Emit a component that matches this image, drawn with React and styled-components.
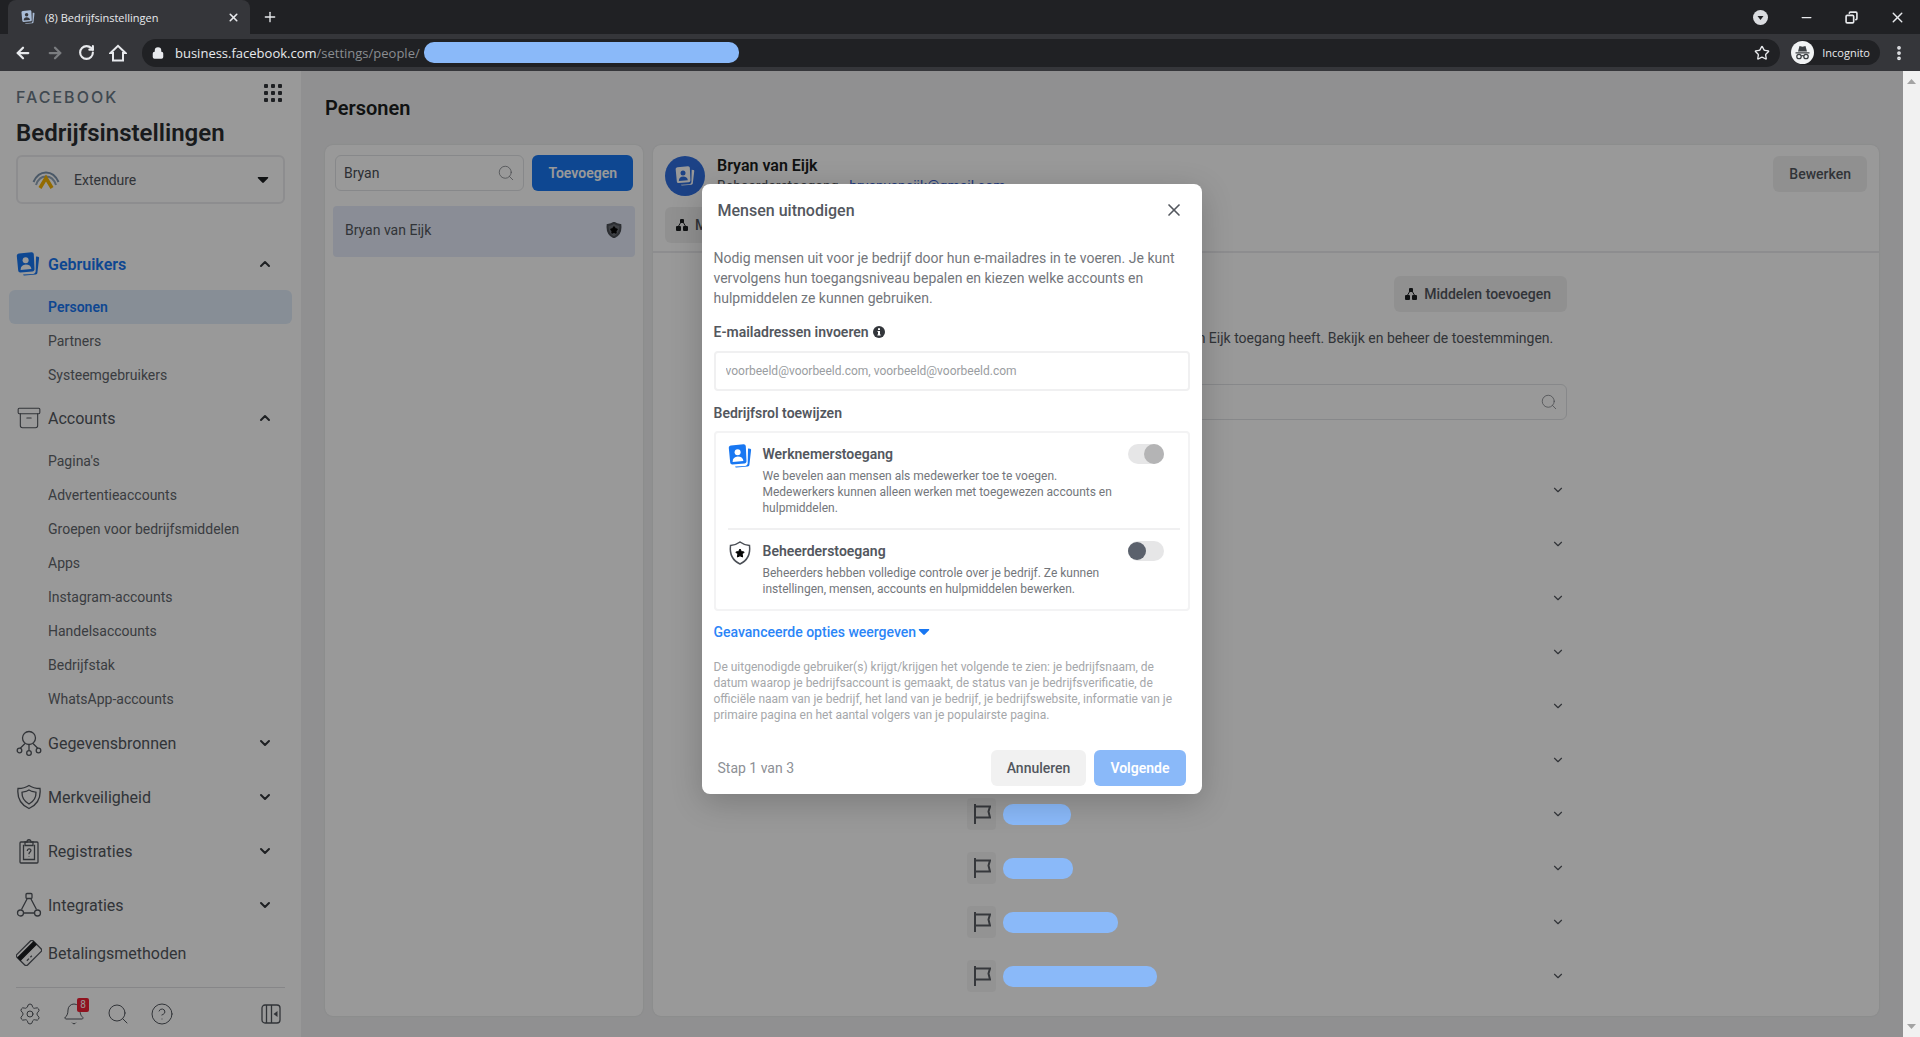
import React from 'react';
import styled, { createGlobalStyle } from 'styled-components';
import { ArrowLeft, ArrowRight, RotateCw, Lock, Star, EllipsisVertical, X, Plus, Minus, Copy, Search, Archive, CircleQuestionMark, Bell, Settings, ChevronDown, ChevronUp } from 'lucide-react';

const accountItems = [
    "Pagina's",
    'Advertentieaccounts',
    'Groepen voor bedrijfsmiddelen',
    'Apps',
    'Instagram-accounts',
    'Handelsaccounts',
    'Bedrijfstak',
    'WhatsApp-accounts',
];

const assets = [70, 96, 84, 110, 76, 90, 68, 70, 115, 154];

const PeopleIcon = ({ size = 24, color = '#1877f2', hole = '#fff' }) => (
    <svg width={size} height={size} viewBox="0 0 24 24" aria-hidden="true">
        <path d="M20 4.5l2.2.3c.6.1 1 .6.9 1.200l-1.700 14.800c-.1.900-.8 1.600-1.700 1.700l-11.200 1c-.7.1-1.300-.4-1.400-1l9.900-.6c1.500-.1 2.600-1.200 2.700-2.700z" fill={color} />
        <path d="M3 1.500L15.500.3c1.200-.1 2.200.8 2.300 2l.7 14.700c.1 1.300-.8 2.300-2.100 2.400L4.500 20.500c-1.200.1-2.200-.7-2.300-1.900L.8 4C.7 2.700 1.700 1.600 3 1.500z" fill={color} />
        <circle cx="9.600" cy="8.300" r="3" fill={hole} />
        <path d="M4.600 18c0-3.500 2-5.300 5.200-5.400 3.200 0 5.200 1.400 5.600 4.500z" fill={hole} />
    </svg>
);

const HomeIcon = () => (
    <svg width="18" height="18" viewBox="0 0 18 18" fill="none" stroke="currentColor" strokeWidth="2" aria-hidden="true">
        <path d="M1.500 9L9 1.800 16.500 9H14v7.500H4V9z" />
    </svg>
);

const SourcesIcon = () => (
    <LineSvg viewBox="0 0 26 26">
        <circle cx="13" cy="8" r="6.500" />
        <path d="M9 13.500l-5 5M17 13.500l5 5M13 14.500v6" />
        <circle cx="3.500" cy="20.500" r="2.300" />
        <circle cx="22.500" cy="20.500" r="2.300" />
        <circle cx="13" cy="23" r="2.300" />
    </LineSvg>
);

const SafetyIcon = () => (
    <LineSvg viewBox="0 0 26 26">
        <path d="M13 1.500c3 2 7 3 11 3 1 9-2 16-11 20C4 20.500 1 13.500 2 4.500c4 0 8-1 11-3z" />
        <path d="M13 6l3 1.500 4 .7c.2 5-2 9-7 11.800-5-2.800-7.200-6.800-7-11.800l4-.7z" />
    </LineSvg>
);

const RegistrationIcon = () => (
    <LineSvg viewBox="0 0 26 26">
        <rect x="4" y="4" width="18" height="21" rx="1" />
        <path d="M8 7.500H7.500v14h11v-14H18M9 7.500h8V4h-2c0-3-4-3-4 0H9z" />
        <path d="M11.300 13c0-3 4-2.500 3.600-.3-.2 1.200-1.800 1.400-1.900 3v.6M13 18.500v.5" />
    </LineSvg>
);

const IntegrationIcon = () => (
    <LineSvg viewBox="0 0 26 26">
        <rect x="10" y="1.500" width="6" height="5" rx="1" />
        <path d="M11 7L5.500 17.500M15 7l5.500 10.500M7.500 21h11" />
        <circle cx="4.500" cy="21" r="3" />
        <circle cx="21.500" cy="21" r="3" />
    </LineSvg>
);

const PaymentIcon = () => (
    <LineSvg viewBox="0 0 26 26">
        <g transform="rotate(-45 13 13)">
            <rect x="1.500" y="5.500" width="23" height="15" rx="2" />
            <rect x="2" y="8.500" width="22" height="3.500" fill="#1c1e21" stroke="#1c1e21" />
            <path d="M6 17h3M11 17h2" />
        </g>
    </LineSvg>
);

const PanelIcon = () => (
    <LineSvg $size={20} viewBox="0 0 20 20">
        <rect x="1" y="1" width="18" height="18" rx="3" />
        <path d="M10.500 1v18M5.500 1v18" />
        <path d="M16.500 7v6l-4-3z" fill="currentColor" stroke="none" />
    </LineSvg>
);

const AdminShield = ({ size = 24, filled }) => (
    <svg width={size} height={size} viewBox="0 0 24 24" aria-hidden="true">
        <path d="M12 1c2.500 2 5.500 3 9.500 3.500C22.500 13 20.500 19 12 23 3.500 19 1.500 13 2.500 4.500 6.500 4 9.500 3 12 1z" fill={filled ? '#6b6f76' : 'none'} stroke="#4b4f56" strokeWidth={filled ? 3 : 1.5} />
        <path d="M12 8l1.400 2.500 2.800.6-2 2 .4 2.900-2.600-1.200L9.400 16l.4-2.900-2-2 2.800-.6z" fill="#050505" stroke="#050505" strokeWidth={filled ? 3 : 1} strokeLinejoin="round" />
    </svg>
);

const AssetIcon = () => (
    <svg width="14" height="14" viewBox="0 0 14 14" fill="#1c1e21" aria-hidden="true">
        <path d="M6 4L3 9M8 4l3 5" stroke="#1c1e21" strokeWidth="1" />
        <rect x="5" y="1" width="4" height="4" rx="1" />
        <rect x="1" y="8" width="5" height="5" rx="1" />
        <rect x="8" y="8" width="5" height="5" rx="1" />
    </svg>
);

const FlagIcon = () => (
    <svg width="18" height="20" viewBox="0 0 18 20" fill="none" stroke="#5a5e64" strokeWidth="2" aria-hidden="true">
        <path d="M2 0v20M2 2.500h15l-1.500 5 1.500 6H2" />
    </svg>
);

const Caret = ({ color = '#1c1e21' }) => (
    <svg width="12" height="8" viewBox="0 0 12 8" aria-hidden="true">
        <path d="M1.500 1h9c.8 0 1 .7.500 1.200L6.800 6.600c-.5.500-1.100.5-1.600 0L1 2.200C.5 1.700.7 1 1.500 1z" fill={color} />
    </svg>
);

const CompanyLogo = () => (
    <svg width="28" height="18" viewBox="0 0 28 18" fill="none" aria-hidden="true">
        <path d="M1.500 11C5 3 10 1.500 14 1.500S23 3 26.500 11" stroke="#7d95ad" strokeWidth="2" />
        <path d="M4 14c2-6 6-8.500 10-8.500s8 2.500 10 8.500" stroke="#93a7ba" strokeWidth="2" />
        <path d="M8 17l6-10 6 10" stroke="#f5b301" strokeWidth="3.500" />
    </svg>
);

const IncognitoIcon = () => (
    <svg width="23" height="23" viewBox="0 0 23 23" aria-hidden="true">
        <circle cx="11.500" cy="11.500" r="11.500" fill="#f1f3f4" />
        <path d="M8.500 5l3 .8 3-.8 1.500 5.500H7zM4.500 11.200h14v1.200h-14z" fill="#3c4043" />
        <g fill="none" stroke="#3c4043" strokeWidth="1.300">
            <circle cx="8" cy="15.500" r="2.200" />
            <circle cx="15" cy="15.500" r="2.200" />
            <path d="M10.200 15c.8-.5 1.800-.5 2.600 0" />
        </g>
    </svg>
);

const NavGroup = ({ icon, label, open, active, items }) => (
    <li>
        <GroupButton $open={open} $active={active}>
            <IconSlot>{icon}</IconSlot>
            <GroupLabel>{label}</GroupLabel>
            {open ? <ChevronUp size={16} strokeWidth={3} color="#33363b" /> : <ChevronDown size={16} strokeWidth={3} color="#33363b" />}
        </GroupButton>
        {items && (
            <NavList>
                {items.map((item) => (
                    <li key={item}>
                        <NavLink href="#" $active={item === 'Personen'}>{item}</NavLink>
                    </li>
                ))}
            </NavList>
        )}
    </li>
);

const Browser = () => (
    <header>
        <TabStrip>
            <Tab>
                <PeopleIcon size={14} color="#a9bcd6" hole="#35363a" />
                <TabTitle>(8) Bedrijfsinstellingen</TabTitle>
                <ChromeButton aria-label="Tabblad sluiten"><X size={13} strokeWidth={3} /></ChromeButton>
            </Tab>
            <NewTab aria-label="Nieuw tabblad"><Plus size={16} strokeWidth={2} /></NewTab>
            <WindowButtons>
                <ChromeButton aria-label="Account">
                    <svg width="15" height="15" viewBox="0 0 15 15" aria-hidden="true">
                        <circle cx="7.500" cy="7.500" r="7.500" fill="#dadce0" />
                        <path d="M4.500 6h6l-3 4z" fill="#202124" />
                    </svg>
                </ChromeButton>
                <ChromeButton aria-label="Minimaliseren"><Minus size={15} /></ChromeButton>
                <ChromeButton aria-label="Vorig formaat"><Restore size={13} strokeWidth={3} /></ChromeButton>
                <ChromeButton aria-label="Sluiten"><X size={17} /></ChromeButton>
            </WindowButtons>
        </TabStrip>
        <Toolbar>
            <NavButtons>
                <ChromeButton aria-label="Vorige"><ArrowLeft size={18} strokeWidth={3} /></ChromeButton>
                <ChromeButton aria-label="Volgende pagina" $dim><ArrowRight size={18} strokeWidth={3} /></ChromeButton>
                <ChromeButton aria-label="Vernieuwen"><RotateCw size={17} strokeWidth={3} /></ChromeButton>
                <ChromeButton aria-label="Startpagina"><HomeIcon /></ChromeButton>
            </NavButtons>
            <AddressBar>
                <Lock size={12} strokeWidth={3} fill="#e8eaed" />
                <Url>business.facebook.com<span>/settings/people/</span></Url>
                <Redacted $width={315} />
                <Spacer />
                <ChromeButton aria-label="Bladwijzer"><Star size={16} strokeWidth={2} /></ChromeButton>
            </AddressBar>
            <Incognito>
                <IncognitoIcon />
                Incognito
            </Incognito>
            <ChromeButton aria-label="Menu"><EllipsisVertical size={18} strokeWidth={3} /></ChromeButton>
        </Toolbar>
    </header>
);

const Sidebar = () => (
    <SidebarBox>
        <BrandRow>
            <Brand>FACEBOOK</Brand>
            <PlainButton aria-label="Alle hulpmiddelen">
                <svg width="20" height="20" viewBox="0 0 20 20" fill="#33363b" aria-hidden="true">
                    {[0, 7, 14].map((y) => [0, 7, 14].map((x) => <rect key={x + '-' + y} x={x + 1} y={y + 1} width="4" height="4" rx="1" />))}
                </svg>
            </PlainButton>
        </BrandRow>
        <SidebarTitle>Bedrijfsinstellingen</SidebarTitle>
        <CompanyPicker>
            <CompanyLogo />
            <CompanySelect aria-label="Bedrijf">
                <option>Extendure</option>
            </CompanySelect>
            <Caret />
        </CompanyPicker>
        <nav>
            <NavList>
                <NavGroup icon={<PeopleIcon />} label="Gebruikers" open active items={['Personen', 'Partners', 'Systeemgebruikers']} />
                <NavGroup icon={<Archive size={26} strokeWidth={1} />} label="Accounts" open items={accountItems} />
                <NavGroup icon={<SourcesIcon />} label="Gegevensbronnen" />
                <NavGroup icon={<SafetyIcon />} label="Merkveiligheid" />
                <NavGroup icon={<RegistrationIcon />} label="Registraties" />
                <NavGroup icon={<IntegrationIcon />} label="Integraties" />
                <li>
                    <GroupLink href="#">
                        <IconSlot><PaymentIcon /></IconSlot>
                        <GroupLabel>Betalingsmethoden</GroupLabel>
                    </GroupLink>
                </li>
            </NavList>
        </nav>
        <SidebarFooter>
            <PlainButton aria-label="Instellingen"><Settings size={24} strokeWidth={1} /></PlainButton>
            <PlainButton aria-label="Meldingen">
                <Bell size={24} strokeWidth={1} />
                <Badge>8</Badge>
            </PlainButton>
            <PlainButton aria-label="Zoeken"><Search size={24} strokeWidth={1} /></PlainButton>
            <PlainButton aria-label="Help"><CircleQuestionMark size={24} strokeWidth={1} /></PlainButton>
            <Spacer />
            <PlainButton aria-label="Menu inklappen"><PanelIcon /></PlainButton>
        </SidebarFooter>
    </SidebarBox>
);

const InviteDialog = () => (
    <Dialog role="dialog" aria-labelledby="invite-title">
        <DialogHeader>
            <DialogTitle id="invite-title">Mensen uitnodigen</DialogTitle>
            <PlainButton aria-label="Sluiten"><X size={20} strokeWidth={2} /></PlainButton>
        </DialogHeader>
        <DialogBody>
            <Intro>
                Nodig mensen uit voor je bedrijf door hun e-mailadres in te voeren. Je kunt vervolgens hun toegangsniveau bepalen en kiezen welke accounts en hulpmiddelen ze kunnen gebruiken.
            </Intro>
            <FieldLabel htmlFor="emails">
                E-mailadressen invoeren
                <svg width="12" height="12" viewBox="0 0 12 12" aria-hidden="true">
                    <circle cx="6" cy="6" r="6" fill="#33363b" />
                    <path d="M5 2.300h2v1.600H5zM4.500 5H7v3.500h.7v1H4.400v-1H5V6h-.5z" fill="#fff" />
                </svg>
            </FieldLabel>
            <EmailInput id="emails" placeholder="voorbeeld@voorbeeld.com, voorbeeld@voorbeeld.com" />
            <SectionLabel>Bedrijfsrol toewijzen</SectionLabel>
            <RoleBox>
                <Role>
                    <PeopleIcon />
                    <div>
                        <RoleTitle htmlFor="employee">Werknemerstoegang</RoleTitle>
                        <RoleText>We bevelen aan mensen als medewerker toe te voegen. Medewerkers kunnen alleen werken met toegewezen accounts en hulpmiddelen.</RoleText>
                    </div>
                    <Switch id="employee" type="checkbox" defaultChecked disabled />
                </Role>
                <Role>
                    <AdminShield />
                    <div>
                        <RoleTitle htmlFor="admin">Beheerderstoegang</RoleTitle>
                        <RoleText>Beheerders hebben volledige controle over je bedrijf. Ze kunnen instellingen, mensen, accounts en hulpmiddelen bewerken.</RoleText>
                    </div>
                    <Switch id="admin" type="checkbox" />
                </Role>
            </RoleBox>
            <AdvancedLink href="#">
                Geavanceerde opties weergeven
                <Caret color="#1877f2" />
            </AdvancedLink>
            <FinePrint>
                De uitgenodigde gebruiker(s) krijgt/krijgen het volgende te zien: je bedrijfsnaam, de datum waarop je bedrijfsaccount is gemaakt, de status van je bedrijfsverificatie, de officiële naam van je bedrijf, het land van je bedrijf, je bedrijfswebsite, informatie van je primaire pagina en het aantal volgers van je populairste pagina.
            </FinePrint>
        </DialogBody>
        <DialogFooter>
            <Step>Stap 1 van 3</Step>
            <Button>Annuleren</Button>
            <Button $primary disabled>Volgende</Button>
        </DialogFooter>
    </Dialog>
);

const App = () => {
    return (
        <Window>
            <GlobalStyle />
            <Browser />
            <Viewport>
                <Page>
                    <Sidebar />
                    <Main>
                        <PageTitle>Personen</PageTitle>
                        <Panels>
                            <PeoplePanel>
                                <SearchRow>
                                    <SearchBox>
                                        <input aria-label="Personen zoeken" defaultValue="Bryan" />
                                        <Search size={18} strokeWidth={1} />
                                    </SearchBox>
                                    <Button $strong>Toevoegen</Button>
                                </SearchRow>
                                <PersonRow>
                                    Bryan van Eijk
                                    <AdminShield size={16} filled />
                                </PersonRow>
                            </PeoplePanel>
                            <DetailPanel>
                                <DetailHeader>
                                    <Person>
                                        <Avatar><PeopleIcon size={20} color="#fff" hole="#2f6fe0" /></Avatar>
                                        <div>
                                            <PersonName>Bryan van Eijk</PersonName>
                                            <PersonMeta>Beheerderstoegang · <a href="#">bryanvaneijk@gmail.com</a></PersonMeta>
                                        </div>
                                        <Spacer />
                                        <Button>Bewerken</Button>
                                    </Person>
                                    <Button $icon><AssetIcon />Middelen toewijzen</Button>
                                </DetailHeader>
                                <Assets>
                                    <AssetsTop>
                                        <Button $icon><AssetIcon />Middelen toevoegen</Button>
                                    </AssetsTop>
                                    <AssetsText>Dit zijn de middelen waartoe Bryan van Eijk toegang heeft. Bekijk en beheer de toestemmingen.</AssetsText>
                                    <SearchBox>
                                        <input aria-label="Middelen zoeken" />
                                        <Search size={18} strokeWidth={1} />
                                    </SearchBox>
                                    <AssetList>
                                        {assets.map((width, i) => (
                                            <AssetRow key={i}>
                                                <FlagBox><FlagIcon /></FlagBox>
                                                <Redacted $width={width} />
                                                <Spacer />
                                                <PlainButton aria-label="Uitklappen"><ChevronDown size={14} strokeWidth={2} /></PlainButton>
                                            </AssetRow>
                                        ))}
                                    </AssetList>
                                </Assets>
                            </DetailPanel>
                        </Panels>
                    </Main>
                    <Scrim />
                    <DialogLayer>
                        <InviteDialog />
                    </DialogLayer>
                </Page>
                <Scrollbar>
                    <svg width="9" height="5" viewBox="0 0 9 5" aria-hidden="true"><path d="M0 5l4.500-5L9 5z" fill="#a3a3a3" /></svg>
                    <svg width="9" height="5" viewBox="0 0 9 5" aria-hidden="true"><path d="M0 0l4.500 5L9 0z" fill="#a3a3a3" /></svg>
                </Scrollbar>
            </Viewport>
        </Window>
    )
}

export default App

const GlobalStyle = createGlobalStyle`
    * {
        box-sizing: border-box;
    }
    body {
        margin: 0;
        font-family: Roboto, "Liberation Sans", sans-serif;
        font-size: 14px;
        color: #53575e;
    }
    button, input, select {
        font: inherit;
        color: inherit;
    }
    h1, h2, h3, p, ul {
        margin: 0;
        padding: 0;
    }
    svg {
        flex: none;
    }
`

const Window = styled.div`
    min-height: 100vh;
    display: flex;
    flex-direction: column;
`

const Spacer = styled.div`
    flex: 1;
`

const LineSvg = styled.svg.attrs({ 'aria-hidden': true })`
    width: ${(props) => props.$size || 26}px;
    height: ${(props) => props.$size || 26}px;
    fill: none;
    stroke: currentColor;
    stroke-width: 1.3;
`

const TabStrip = styled.div`
    height: 34px;
    padding-left: 8px;
    background-color: #202124;
    color: #e8eaed;
    display: flex;
    align-items: center;
    font-family: "Open Sans", "Noto Sans", sans-serif;
`

const Tab = styled.div`
    width: 242px;
    height: 34px;
    padding: 0 10px 0 13px;
    border-radius: 8px 8px 0 0;
    background-color: #35363a;
    display: flex;
    align-items: center;
    gap: 10px;
`

const TabTitle = styled.div`
    flex: 1;
    font-size: 11px;
    white-space: nowrap;
`

const ChromeButton = styled.button`
    border: none;
    padding: 0;
    background: none;
    color: ${(props) => (props.$dim ? '#7b7d80' : '#e8eaed')};
    display: flex;
    cursor: pointer;
`

const NewTab = styled(ChromeButton)`
    margin-left: 12px;
`

const WindowButtons = styled.div`
    margin-left: auto;
    padding-right: 14px;
    display: flex;
    align-items: center;
    gap: 31px;
`

const Restore = styled(Copy)`
    transform: scaleX(-1);
`

const Toolbar = styled.div`
    height: 37px;
    padding: 0 12px;
    background-color: #35363a;
    color: #e8eaed;
    display: flex;
    align-items: center;
    font-family: "Open Sans", "Noto Sans", sans-serif;
`

const NavButtons = styled.div`
    width: 130px;
    padding-left: 2px;
    display: flex;
    gap: 14px;
`

const AddressBar = styled.div`
    flex: 1;
    height: 28px;
    padding: 0 10px;
    border-radius: 14px;
    background-color: #202124;
    display: flex;
    align-items: center;
`

const Url = styled.div`
    padding: 0 4px 0 11px;
    font-size: 13px;
    white-space: nowrap;
    span {
        color: #8a8d91;
    }
`

const Redacted = styled.div`
    position: relative;
    z-index: 2;
    width: ${(props) => props.$width}px;
    height: 21px;
    border-radius: 10px;
    background-color: #8ab9f9;
`

const Incognito = styled.div`
    height: 25px;
    margin: 0 10px 0 11px;
    padding-right: 10px;
    border-radius: 13px;
    background-color: #202124;
    display: flex;
    align-items: center;
    gap: 8px;
    font-size: 11px;
`

const Viewport = styled.div`
    flex: 1;
    display: flex;
`

const Page = styled.div`
    position: relative;
    flex: 1;
    display: flex;
    background-color: #f0f1f2;
`

const Scrollbar = styled.div`
    width: 17px;
    padding: 8px 4px;
    background-color: #f1f1f1;
    display: flex;
    flex-direction: column;
    justify-content: space-between;
`

const SidebarBox = styled.aside`
    width: 301px;
    flex: none;
    padding: 12px 8px 0;
    background-color: #fff;
    display: flex;
    flex-direction: column;
`

const BrandRow = styled.div`
    height: 28px;
    padding: 0 10px 0 8px;
    display: flex;
    align-items: flex-start;
    justify-content: space-between;
`

const Brand = styled.div`
    padding-top: 4px;
    font-family: Inter, Roboto, sans-serif;
    font-size: 16px;
    line-height: 20px;
    font-weight: 500;
    letter-spacing: 2px;
    color: #6c7b88;
`

const PlainButton = styled.button`
    position: relative;
    border: none;
    padding: 0;
    background: none;
    display: flex;
    cursor: pointer;
`

const SidebarTitle = styled.h1`
    padding: 8px 8px 0;
    font-size: 24px;
    line-height: 28px;
    font-weight: 600;
    color: #2b2d31;
`

const CompanyPicker = styled.label`
    height: 49px;
    margin: 8px 8px 34px;
    padding: 0 14px;
    border: 2px solid #ececee;
    border-radius: 6px;
    display: flex;
    align-items: center;
    gap: 14px;
`

const CompanySelect = styled.select`
    flex: 1;
    appearance: none;
    border: none;
    padding: 0;
    background: none;
`

const NavList = styled.ul`
    list-style: none;
`

const GroupButton = styled.button`
    width: 100%;
    height: ${(props) => (props.$open ? 52 : 54)}px;
    padding: 0 20px 0 8px;
    border: none;
    background: none;
    color: ${(props) => (props.$active ? '#1877f2' : '#53575e')};
    font-weight: ${(props) => (props.$active ? 600 : 400)};
    font-size: 16px;
    text-align: left;
    display: flex;
    align-items: center;
    gap: 6px;
    cursor: pointer;
`

const GroupLink = styled.a`
    height: 42px;
    padding-left: 8px;
    color: #53575e;
    font-size: 16px;
    text-decoration: none;
    display: flex;
    align-items: center;
    gap: 6px;
`

const IconSlot = styled.span`
    width: 26px;
    display: flex;
`

const GroupLabel = styled.span`
    flex: 1;
`

const NavLink = styled.a`
    height: 34px;
    margin: 0 1px;
    padding-left: 39px;
    border-radius: 6px;
    background-color: ${(props) => (props.$active ? '#e1edfb' : 'transparent')};
    color: ${(props) => (props.$active ? '#1877f2' : '#62666c')};
    font-weight: ${(props) => (props.$active ? 600 : 400)};
    text-decoration: none;
    display: flex;
    align-items: center;
`

const SidebarFooter = styled.div`
    height: 50px;
    margin: auto 8px 0;
    padding: 2px 4px 0 2px;
    border-top: 1px solid #dfe0e3;
    display: flex;
    align-items: center;
    gap: 20px;
`

const Badge = styled.span`
    position: absolute;
    top: -4px;
    right: -3px;
    width: 12px;
    height: 14px;
    border-radius: 2px;
    background-color: #f02035;
    color: #fff;
    font-size: 10px;
    line-height: 14px;
    text-align: center;
`

const Main = styled.main`
    flex: 1;
    padding: 25px 24px 21px;
    display: flex;
    flex-direction: column;
`

const PageTitle = styled.h2`
    font-size: 20px;
    line-height: 24px;
    font-weight: 600;
    color: #1c1e21;
`

const Panels = styled.div`
    flex: 1;
    margin-top: 25px;
    display: flex;
    gap: 10px;
`

const Panel = styled.section`
    background-color: #fff;
    border-radius: 8px;
    box-shadow: 0 0 2px rgba(0, 0, 0, 0.1);
`

const PeoplePanel = styled(Panel)`
    width: 318px;
    padding: 10px 8px;
`

const DetailPanel = styled(Panel)`
    flex: 1;
`

const SearchRow = styled.div`
    padding: 0 2px;
    display: flex;
    gap: 8px;
`

const SearchBox = styled.label`
    flex: 1;
    min-width: 0;
    height: 36px;
    padding: 0 8px;
    border: 1px solid #e1e3e6;
    border-radius: 6px;
    color: #777b80;
    display: flex;
    align-items: center;
    input {
        flex: 1;
        min-width: 0;
        padding: 0;
        border: none;
        outline: none;
        background: none;
        color: #4b4f56;
    }
`

const buttonFill = (props) => {
    if (props.$strong) return '#1877f2';
    if (props.$primary) return '#8ab9f9';
    return '#f1f1f1';
};

const Button = styled.button`
    height: 36px;
    padding: ${(props) => (props.$icon ? '0 16px 0 10px' : '0 16px')};
    border: none;
    border-radius: 6px;
    background-color: ${buttonFill};
    color: ${(props) => (props.$strong || props.$primary ? '#fff' : '#53575e')};
    font-weight: ${(props) => (props.$strong || props.$primary ? 600 : 500)};
    display: flex;
    align-items: center;
    justify-content: center;
    gap: 6px;
    cursor: pointer;
`

const PersonRow = styled.div`
    height: 51px;
    margin-top: 15px;
    padding: 0 13px 3px 12px;
    border-radius: 4px;
    background-color: #e6ecfa;
    display: flex;
    align-items: center;
    justify-content: space-between;
`

const DetailHeader = styled.div`
    height: 108px;
    padding: 11px 12px;
    border-bottom: 2px solid #ececee;
`

const Person = styled.div`
    height: 51px;
    display: flex;
    align-items: flex-start;
    gap: 12px;
`

const Avatar = styled.div`
    width: 40px;
    height: 40px;
    border-radius: 50%;
    background-color: #2f6fe0;
    display: flex;
    align-items: center;
    justify-content: center;
`

const PersonName = styled.h3`
    font-size: 16px;
    line-height: 20px;
    font-weight: 600;
    color: #1c1e21;
`

const PersonMeta = styled.div`
    line-height: 20px;
    a {
        color: #385fd0;
        text-decoration: none;
    }
`

const Assets = styled.div`
    max-width: 602px;
    margin: 0 auto;
    padding-top: 23px;
    ${SearchBox} {
        margin-top: 36px;
    }
`

const AssetsTop = styled.div`
    display: flex;
    justify-content: flex-end;
`

const AssetsText = styled.p`
    margin-top: 16px;
    padding-right: 14px;
    line-height: 20px;
    text-align: right;
    white-space: nowrap;
`

const AssetList = styled.div`
    margin-top: 43px;
`

const AssetRow = styled.div`
    height: 54px;
    padding: 0 2px;
    display: flex;
    align-items: center;
`

const FlagBox = styled.div`
    width: 29px;
    height: 32px;
    margin-right: 7px;
    border-radius: 4px;
    background-color: #f6f6f6;
    display: flex;
    align-items: center;
    justify-content: center;
`

const Scrim = styled.div`
    position: absolute;
    inset: 0;
    z-index: 1;
    background-color: rgba(0, 0, 0, 0.4);
`

const DialogLayer = styled.div`
    position: absolute;
    inset: 0;
    z-index: 3;
    padding-top: 113px;
    display: flex;
    justify-content: center;
    align-items: flex-start;
`

const Dialog = styled.div`
    width: 500px;
    padding: 0 12px;
    border-radius: 8px;
    background-color: #fff;
    box-shadow: 0 8px 32px rgba(0, 0, 0, 0.2);
`

const DialogHeader = styled.div`
    height: 52px;
    padding: 0 6px 0 4px;
    display: flex;
    align-items: center;
    justify-content: space-between;
`

const DialogTitle = styled.h2`
    font-size: 16px;
    font-weight: 500;
`

const DialogBody = styled.div`
    padding-top: 12px;
`

const Intro = styled.p`
    line-height: 20px;
    color: #73767b;
`

const FieldLabel = styled.label`
    margin-top: 14px;
    line-height: 20px;
    font-weight: 600;
    display: flex;
    align-items: center;
    gap: 4px;
`

const SectionLabel = styled.div`
    margin-top: 12px;
    line-height: 20px;
    font-weight: 600;
`

const EmailInput = styled.input`
    width: 100%;
    height: 40px;
    margin-top: 9px;
    padding: 0 10px;
    border: 2px solid #f0f0f1;
    border-radius: 4px;
    font-size: 12px;
    &::placeholder {
        color: #9a9da1;
    }
`

const RoleBox = styled.div`
    margin-top: 8px;
    padding: 0 8px 0 12px;
    border: 2px solid #f3f3f4;
    border-radius: 4px;
`

const Role = styled.div`
    padding: 11px 16px 12px 0;
    display: grid;
    grid-template-columns: 24px 1fr 36px;
    gap: 11px;
    & + & {
        border-top: 2px solid #f0f0f1;
    }
`

const RoleTitle = styled.label`
    display: block;
    line-height: 20px;
    font-weight: 600;
`

const RoleText = styled.p`
    margin-top: 4px;
    font-size: 12px;
    line-height: 16px;
    color: #73767b;
`

const Switch = styled.input`
    appearance: none;
    width: 36px;
    height: 20px;
    margin: 0;
    border-radius: 10px;
    background-color: #e6e6e7;
    display: flex;
    align-items: center;
    cursor: pointer;
    &::before {
        content: '';
        width: 18px;
        height: 18px;
        border-radius: 50%;
        background-color: #5b616c;
    }
    &:checked {
        justify-content: flex-end;
    }
    &:checked::before {
        width: 20px;
        height: 20px;
        background-color: #b4b4b5;
    }
`

const AdvancedLink = styled.a`
    margin-top: 11px;
    line-height: 20px;
    font-weight: 500;
    color: #2b85f7;
    text-decoration: none;
    display: flex;
    align-items: center;
    gap: 2px;
`

const FinePrint = styled.p`
    margin-top: 17px;
    font-size: 12px;
    line-height: 16px;
    color: #a5a7aa;
`

const DialogFooter = styled.div`
    padding: 27px 4px 8px;
    display: flex;
    align-items: center;
    gap: 8px;
`

const Step = styled.div`
    flex: 1;
    color: #8d9095;
`
